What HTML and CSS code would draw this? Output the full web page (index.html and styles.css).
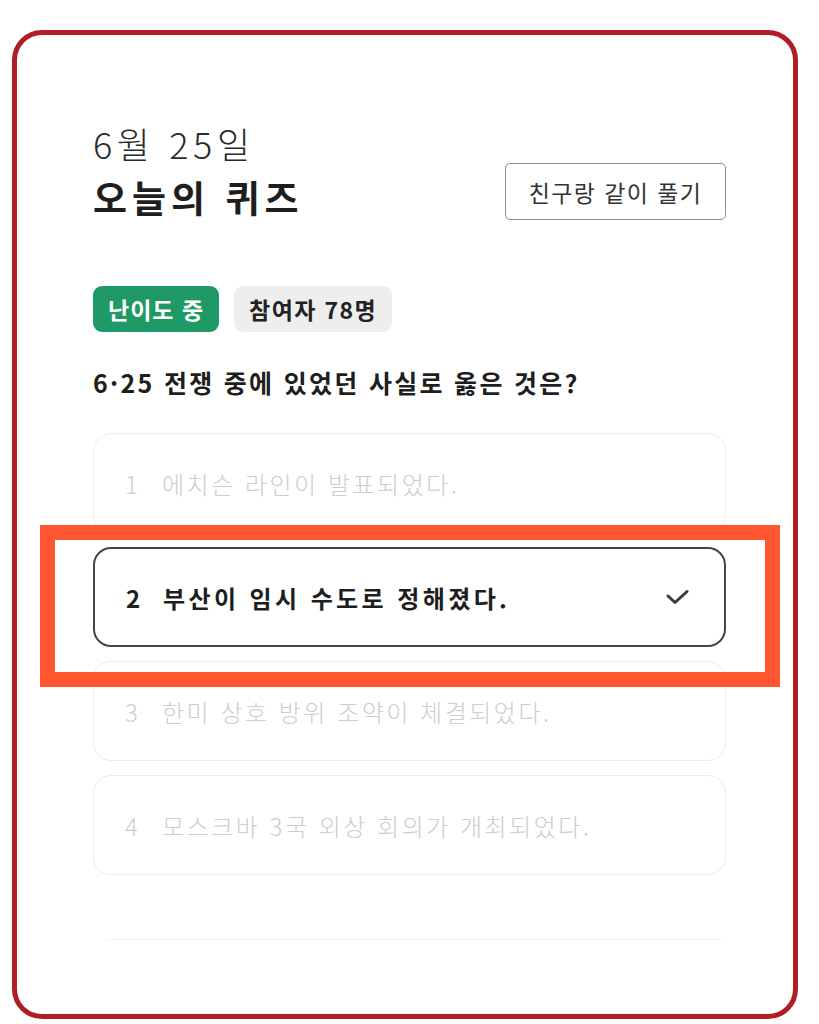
FILE: index.html
```html
<!DOCTYPE html>
<html lang="ko">
  <head>
    <meta charset="utf-8">
    <title>오늘의 퀴즈</title>
    <link rel="stylesheet" href="styles.css">
  </head>
  <body>

    <div class="frame">

      <div class="header">
        <div class="heading">
          <div class="date">6월 25일</div>
          <h1 class="title">오늘의 퀴즈</h1>
        </div>
        <button class="share">친구랑 같이 풀기</button>
      </div>

      <div class="tags">
        <span class="tag tag-level">난이도 중</span>
        <span class="tag tag-count">참여자 78명</span>
      </div>

      <p class="question">6·25 전쟁 중에 있었던 사실로 옳은 것은?</p>

      <div class="options">
        <div class="option">
          <span class="num">1</span>
          <span class="text">에치슨 라인이 발표되었다.</span>
        </div>
        <div class="option selected">
          <span class="num">2</span>
          <span class="text">부산이 임시 수도로 정해졌다.</span>
          <svg class="check" width="24" height="16" viewBox="0 0 24 16">
            <polyline points="2,7 9,13.5 21,2.5" fill="none" stroke="#3a3a3a" stroke-width="3" stroke-linecap="round" stroke-linejoin="round"/>
          </svg>
        </div>
        <div class="option">
          <span class="num">3</span>
          <span class="text">한미 상호 방위 조약이 체결되었다.</span>
        </div>
        <div class="option">
          <span class="num">4</span>
          <span class="text">모스크바 3국 외상 회의가 개최되었다.</span>
        </div>
      </div>

      <div class="divider"></div>

      <!-- highlight around the chosen answer -->
      <div class="highlight"></div>
    </div>

  </body>
</html>
```

FILE: styles.css
```css
body {
  margin: 0;
  background: #fff;
  font-family: "Noto Sans CJK KR", "Noto Sans", sans-serif;
  color: #222;
}

.frame {
  position: relative;
  box-sizing: border-box;
  width: 786px;
  height: 989px;
  margin: 30px 0 0 12px;
  padding: 82px 67px 0 76px;
  border: 5px solid #b11d24;
  border-radius: 30px;
}

.header {
  display: flex;
  justify-content: space-between;
  align-items: flex-end;
}

.date {
  font-size: 36px;
  font-weight: 300;
  line-height: 53px;
  letter-spacing: 4.6px;
  color: #2a2a2a;
}

.title {
  margin: 0;
  font-size: 37px;
  font-weight: 700;
  line-height: 54px;
  letter-spacing: 5px;
  color: #1e1e1e;
}

.share {
  box-sizing: border-box;
  width: 221px;
  height: 57px;
  margin-bottom: 4px;
  padding: 0;
  border: 1.5px solid #8c8c8c;
  border-radius: 5px;
  background: #fff;
  font-family: inherit;
  font-size: 23px;
  letter-spacing: 1.4px;
  color: #333;
}

.tags {
  display: flex;
  gap: 15px;
  margin-top: 62px;
}

.tag {
  height: 46px;
  padding: 0 15px;
  border-radius: 9px;
  font-size: 23px;
  font-weight: 700;
  line-height: 46px;
  letter-spacing: 1px;
}

.tag-level {
  background: #1f9966;
  color: #fff;
}

.tag-count {
  background: #eeeeee;
  color: #222;
  letter-spacing: 1.4px;
}

.question {
  margin: 30px 0 0;
  font-size: 25px;
  font-weight: 700;
  line-height: 40px;
  letter-spacing: 2.3px;
  color: #1e1e1e;
}

.options {
  display: flex;
  flex-direction: column;
  gap: 14px;
  margin-top: 31px;
}

.option {
  box-sizing: border-box;
  display: flex;
  align-items: center;
  height: 100px;
  padding: 0 34px 0 31px;
  border: 1.5px solid #ebebeb;
  border-radius: 18px;
  font-size: 24px;
  font-weight: 300;
  letter-spacing: 2.5px;
  color: #cdcdcd;
}

.option .num {
  width: 37px;
  letter-spacing: 0;
}

.option .text {
  flex: 1;
}

.option.selected {
  border: 2px solid #444;
  font-weight: 700;
  letter-spacing: 3.4px;
  color: #1e1e1e;
}

.divider {
  height: 1px;
  margin: 64px 3px 0 14px;
  background: #f2f2f2;
}

.highlight {
  position: absolute;
  left: 23px;
  top: 490px;
  box-sizing: border-box;
  width: 740px;
  height: 162px;
  border: 15px solid #ff5530;
  pointer-events: none;
}
```
